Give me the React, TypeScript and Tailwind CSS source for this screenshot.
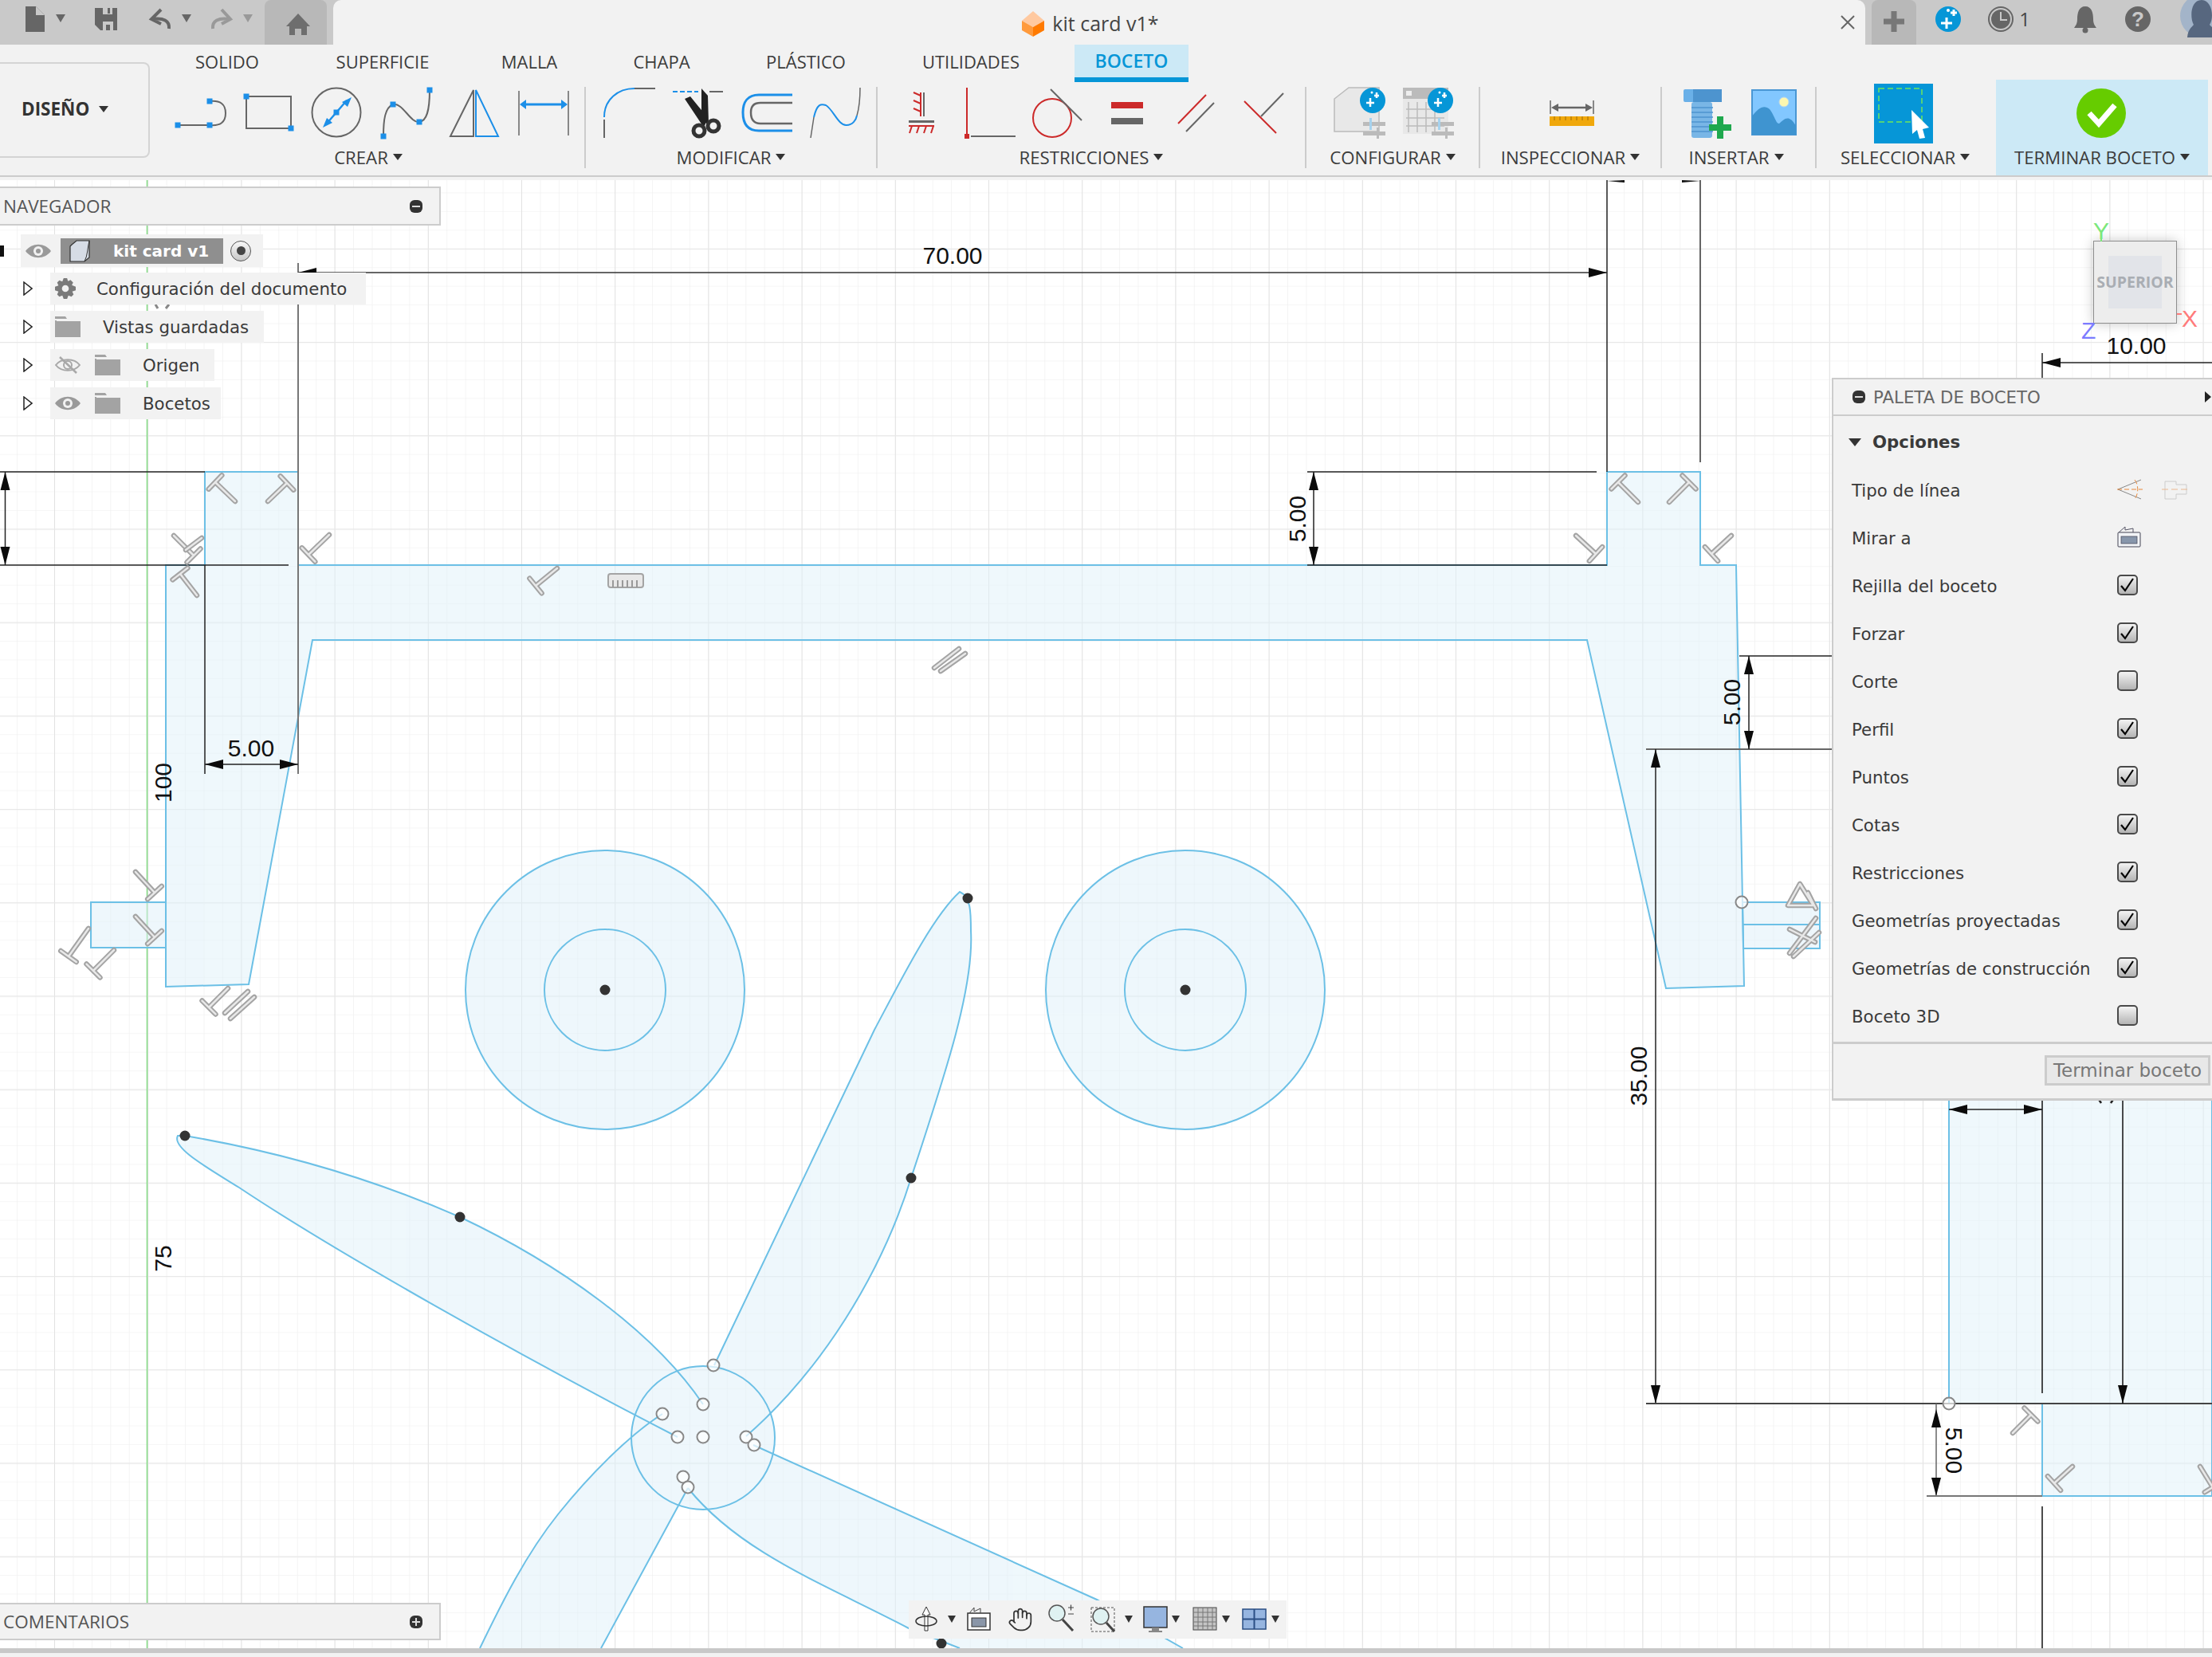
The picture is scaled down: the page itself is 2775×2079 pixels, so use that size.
import type { ReactNode } from 'react';
import { Hand } from 'lucide-react';

const GRAY = '#666';
const BLUE = '#1c8fe8';
const RED = '#cc2a2a';
const SKETCH = '#6cc0e6';

// icons are drawn in page coordinates, the viewBox cuts out the cell
function Cell({ x, y, w, h, children }: { x: number; y: number; w: number; h: number; children?: ReactNode }) {
    return (
        <svg width={w} height={h} viewBox={`${x} ${y} ${w} ${h}`} className="shrink-0">
            {children}
        </svg>
    );
}

function Tool({ x, w, children }: { x: number; w: number; children?: ReactNode }) {
    return <Cell x={x} y={105} w={w} h={75}>{children}</Cell>;
}

function Caret() {
    return <span className="inline-block w-0 h-0 ml-[6px] mb-[3px] border-x-[6px] border-t-[8px] border-x-transparent border-t-[#333]" />;
}

function Group({ label, children, shift = '' }: { label: string; children: ReactNode; shift?: string }) {
    return (
        <div className="flex flex-col shrink-0">
            <div className="flex h-[80px] pt-[5px]">{children}</div>
            <div className={`h-[36px] flex items-center justify-center text-[22.2px] text-[#3c3c3c] ${shift}`}>
                {label}
                <Caret />
            </div>
        </div>
    );
}

function Sep() {
    return <div className="w-[2px] h-[102px] mt-[9px] bg-[#cccccc] shrink-0" />;
}

function Handle({ x, y }: { x: number; y: number }) {
    return <rect x={x - 3.5} y={y - 3.5} width={7} height={7} fill={BLUE} />;
}

function Badge({ cx }: { cx: number }) {
    return (
        <g>
            <ellipse cx={cx} cy={126} rx={16} ry={16} fill="#0696d7" />
            <path d={`M${cx - 3} 123v11M${cx - 8} 129h10M${cx + 5} 116v7M${cx + 2} 120h6`} stroke="#fff" strokeWidth={2.5} />
            <circle cx={cx - 1} cy={116} r={1.5} fill="#fff" />
        </g>
    );
}

function Sliders({ x }: { x: number }) {
    return (
        <g>
            <rect x={x} y={153} width={28} height={5} fill="#bbb" />
            <rect x={x} y={165} width={28} height={5} fill="#bbb" />
            <rect x={x + 8} y={148} width={3} height={15} fill="#a6d2ee" />
            <rect x={x + 17} y={160} width={3} height={14} fill="#bbb" />
        </g>
    );
}

function Eye({ off = false }: { off?: boolean }) {
    return (
        <svg width={32} height={24} viewBox="0 0 32 24" className="shrink-0">
            {off ? (
                <g fill="none" stroke="#a8a8a8" strokeWidth={2}>
                    <path d="M1 12C8 3 24 3 31 12C24 21 8 21 1 12Z" />
                    <circle cx={16} cy={12} r={5} />
                    <path d="M6 2L27 22" strokeWidth={2.5} />
                </g>
            ) : (
                <g>
                    <path d="M0 12C8 1 24 1 32 12C24 23 8 23 0 12Z" fill="#9a9a9a" />
                    <circle cx={16} cy={12} r={6} fill="#f2f2f2" />
                    <circle cx={16} cy={12} r={3} fill="#9a9a9a" />
                </g>
            )}
        </svg>
    );
}

function Folder() {
    return (
        <svg width={32} height={26} viewBox="0 0 32 26" className="shrink-0">
            <path d="M0 0H13L15 3H2V6H32V26H0Z" fill="#a3a3a3" />
            <path d="M0 3H14V5H0Z" fill="#f2f2f2" />
        </svg>
    );
}

function Expander() {
    return (
        <svg width={12} height={18} viewBox="0 0 12 18" className="shrink-0">
            <path d="M1 1L11 9L1 17Z" fill="#fff" stroke="#222" strokeWidth={1.5} />
        </svg>
    );
}

function Pill({ plus = false }: { plus?: boolean }) {
    return (
        <svg width={16} height={16} viewBox="0 0 16 16" className="shrink-0">
            <rect x={0} y={0} width={16} height={16} rx={6} fill="#333" />
            <path d={plus ? 'M3 8H13M8 3V13' : 'M3 8H13'} stroke="#ddd" strokeWidth={2} />
        </svg>
    );
}

function TreeRow({ children, width }: { children: ReactNode; width: string }) {
    return (
        <div className="flex items-center h-[40px]">
            <div className="w-[29px]" />
            <Expander />
            <div className="w-[22px]" />
            <div className={`flex items-center h-full bg-[#f2f2f2] ${width}`}>{children}</div>
        </div>
    );
}

function Checkbox({ checked }: { checked: boolean }) {
    return (
        <div className="relative w-[26px] h-[26px] rounded-[5px] border-2 border-[#4a4a4a] bg-gradient-to-b from-[#f4f4f4] to-[#b4b4b4]">
            {checked && (
                <svg width={22} height={22} viewBox="0 0 22 22" className="absolute inset-0">
                    <path d="M3 12L8 18L18 3" fill="none" stroke="#000" strokeWidth={2.2} />
                </svg>
            )}
        </div>
    );
}

function PaletteRow({ label, children }: { label: string; children: ReactNode }) {
    return (
        <div className="flex items-center h-[60px] pl-[23px]">
            <span className="w-[333px] pt-[3px]">{label}</span>
            {children}
        </div>
    );
}

// constraint glyph: bar centre + end of the stem
function T({ b, s }: { b: [number, number]; s: [number, number] }) {
    const dx = s[0] - b[0];
    const dy = s[1] - b[1];
    const l = Math.hypot(dx, dy);
    const px = (-dy / l) * 12;
    const py = (dx / l) * 12;
    const d = `M${b[0] - px} ${b[1] - py}L${b[0] + px} ${b[1] + py}M${b[0]} ${b[1]}L${s[0]} ${s[1]}`;
    return <Bar d={d} />;
}

function Bar({ d }: { d: string }) {
    return (
        <g fill="none" strokeLinecap="round" strokeLinejoin="round">
            <path d={d} stroke="#a4a4a4" strokeWidth={6.5} />
            <path d={d} stroke="#e8e8e8" strokeWidth={2.5} />
        </g>
    );
}

function Arrow({ x, y, dir }: { x: number; y: number; dir: 'l' | 'r' | 'u' | 'd' }) {
    const len = 23;
    const w = 6;
    const pts = {
        l: `${x},${y} ${x + len},${y - w} ${x + len},${y + w}`,
        r: `${x},${y} ${x - len},${y - w} ${x - len},${y + w}`,
        u: `${x},${y} ${x - w},${y + len} ${x + w},${y + len}`,
        d: `${x},${y} ${x - w},${y - len} ${x + w},${y - len}`,
    }[dir];
    return <polygon points={pts} fill="#0b0b0b" />;
}

function L({ x1, y1, x2, y2, c = '#222', w = 1.5 }: { x1: number; y1: number; x2: number; y2: number; c?: string; w?: number }) {
    return <line x1={x1} y1={y1} x2={x2} y2={y2} stroke={c} strokeWidth={w} />;
}

function Dim({ x, y, rot, children }: { x: number; y: number; rot?: number; children: string }) {
    return (
        <text
            x={x}
            y={y}
            textAnchor="middle"
            dominantBaseline="central"
            transform={rot ? `rotate(${rot} ${x} ${y})` : undefined}
            className="font-['Liberation_Sans',sans-serif] text-[30px] fill-[#111]"
        >
            {children}
        </text>
    );
}

const OUTLINE = 'M208 709L257 709L257 592L374 592L374 709L2016 709L2016 592L2133 592L2133 709L2178 709L2188 1237L2090 1240L1991 803L392 803L312 1235L208 1238Z';
const TAB_RIGHT = 'M2186 1132H2283V1190H2187Z';
const TAB_LEFT = 'M114 1132H208V1189H114Z';
const CORNER = 'M2445 1370H2775V1877H2562V1761H2445Z';
const BLADES = [
    {
        fill: 'M232 1425C350 1445 470 1480 577 1527C700 1585 820 1670 882 1762L850 1803C650 1700 420 1570 300 1490C260 1465 215 1440 223 1425Z',
        line: 'M232 1425C350 1445 470 1480 577 1527C700 1585 820 1670 882 1762M850 1803C650 1700 420 1570 300 1490C260 1465 215 1440 223 1425L232 1425',
    },
    {
        fill: 'M1204 1119C1170 1150 1130 1230 1097 1292L896 1713L936 1802C1030 1720 1105 1600 1143 1478C1185 1350 1222 1240 1218 1168C1218 1145 1218 1125 1204 1119Z',
        line: 'M896 1713L1097 1292C1130 1230 1170 1150 1204 1119C1218 1125 1218 1145 1218 1168C1222 1240 1185 1350 1143 1478C1105 1600 1030 1720 936 1802',
    },
    {
        fill: 'M945 1813L1376 2007L1484 2068L1204 2068L1140 2043C1040 1990 930 1950 863 1867Z',
        line: 'M945 1813L1376 2007L1484 2068M1204 2068L1140 2043C1040 1990 930 1950 863 1867',
    },
    {
        fill: 'M831 1774C790 1800 740 1850 700 1900C660 1950 630 2010 602 2068L754 2068L863 1867Z',
        line: 'M831 1774C790 1800 740 1850 700 1900C660 1950 630 2010 602 2068M754 2068L863 1867',
    },
];

function SketchCanvas() {
    const open: [number, number][] = [
        [895, 1713], [882, 1762], [831, 1774], [850, 1803], [882, 1803], [936, 1803], [946, 1813], [857, 1853], [863, 1866],
        [2185, 1132], [2445, 1761],
    ];
    const solid: [number, number][] = [
        [759, 1242], [1487, 1242], [232, 1425], [577, 1527], [1214, 1127], [1143, 1478], [1181, 2062],
    ];
    const glyphs: [[number, number], [number, number]][] = [
        [[270, 605], [295, 629]], [[360, 606], [336, 629]], [[243, 697], [218, 672]], [[387, 696], [413, 671]],
        [[226, 720], [247, 747]], [[194, 1120], [170, 1094]], [[194, 1176], [170, 1150]], [[86, 1200], [111, 1165]],
        [[117, 1218], [143, 1192]], [[262, 1264], [286, 1240]], [[672, 735], [699, 713]],
        [[2030, 605], [2055, 630]], [[2119, 605], [2094, 630]], [[2002, 695], [1977, 672]], [[2147, 695], [2172, 672]],
        [[2548, 1775], [2525, 1798]], [[2577, 1861], [2600, 1840]], [[2776, 1866], [2760, 1840]],
    ];
    return (
        <svg width={2775} height={1842} viewBox="0 226 2775 1842" className="absolute inset-0">
            <defs>
                <pattern id="minor" x={68} y={1015} width={23.44} height={23.44} patternUnits="userSpaceOnUse">
                    <path d="M0 0V23.44M0 0H23.44" stroke="#eeeeee" strokeWidth={1.2} fill="none" />
                </pattern>
                <pattern id="major" x={68} y={1015} width={117.2} height={117.2} patternUnits="userSpaceOnUse">
                    <path d="M0 0V117.2" stroke="#dedede" strokeWidth={1.6} fill="none" />
                    <path d="M0 0H117.2" stroke="#e8e8e8" strokeWidth={2.6} fill="none" />
                </pattern>
            </defs>
            <rect x={0} y={226} width={2775} height={1842} fill="#fff" />
            <rect x={0} y={226} width={2775} height={1842} fill="url(#minor)" />
            <rect x={0} y={226} width={2775} height={1842} fill="url(#major)" />
            <L x1={184.5} y1={226} x2={184.5} y2={2068} c="#83dc83" w={1.5} />

            {/* one flat tint for all the profiles, outlines on top */}
            <g fill="#dff1fa" opacity={0.5}>
                <path d={OUTLINE} />
                <path d={TAB_LEFT} />
                <path d={TAB_RIGHT} />
                <path d={CORNER} />
                <circle cx={759} cy={1242} r={175} />
                <circle cx={1487} cy={1242} r={175} />
                {BLADES.map(b => (
                    <path key={b.fill} d={b.fill} />
                ))}
                <circle cx={882} cy={1804} r={90} />
            </g>
            <g fill="none" stroke={SKETCH} strokeWidth={2}>
                <path d={OUTLINE} />
                <path d={TAB_LEFT} />
                <path d={TAB_RIGHT} />
                <path d="M2187 1160H2283" />
                <path d={CORNER} />
                <circle cx={759} cy={1242} r={175} />
                <circle cx={759} cy={1242} r={76} />
                <circle cx={1487} cy={1242} r={175} />
                <circle cx={1487} cy={1242} r={76} />
                {BLADES.map(b => (
                    <path key={b.line} d={b.line} />
                ))}
                <circle cx={882} cy={1804} r={90} />
            </g>

            {/* dimensions */}
            <L x1={374} y1={330} x2={374} y2={971} c="#777" w={2} />
            <L x1={257} y1={709} x2={257} y2={971} />
            <L x1={374} y1={342} x2={2016} y2={342} c="#333" />
            <Arrow x={374} y={342} dir="l" />
            <Arrow x={2016} y={342} dir="r" />
            <L x1={2016} y1={226} x2={2016} y2={592} />
            <L x1={2133} y1={226} x2={2133} y2={580} c="#666" w={2} />
            <polygon points="2016,227 2038,226 2038,229" fill="#111" />
            <polygon points="2133,227 2110,226 2110,229" fill="#111" />
            <Dim x={1195} y={320}>70.00</Dim>

            <L x1={0} y1={592} x2={257} y2={592} />
            <L x1={0} y1={709} x2={362} y2={709} />
            <L x1={6.5} y1={592} x2={6.5} y2={709} />
            <Arrow x={6.5} y={592} dir="u" />
            <Arrow x={6.5} y={709} dir="d" />

            <L x1={257} y1={959} x2={374} y2={959} />
            <Arrow x={257} y={959} dir="l" />
            <Arrow x={374} y={959} dir="r" />
            <Dim x={315} y={938}>5.00</Dim>
            <Dim x={204} y={982} rot={-90}>100</Dim>
            <Dim x={204} y={1579} rot={-90}>75</Dim>

            <L x1={1640} y1={592} x2={2003} y2={592} />
            <L x1={1640} y1={709} x2={2016} y2={709} />
            <L x1={1648} y1={592} x2={1648} y2={709} />
            <Arrow x={1648} y={592} dir="u" />
            <Arrow x={1648} y={709} dir="d" />
            <Dim x={1627} y={651} rot={-90}>5.00</Dim>

            <L x1={2182} y1={823} x2={2298} y2={823} />
            <L x1={2065} y1={940} x2={2298} y2={940} c="#666" w={2} />
            <L x1={2194} y1={823} x2={2194} y2={940} />
            <Arrow x={2194} y={823} dir="u" />
            <Arrow x={2194} y={940} dir="d" />
            <Dim x={2172} y={881} rot={-90}>5.00</Dim>

            <L x1={2077} y1={940} x2={2077} y2={1761} />
            <Arrow x={2077} y={940} dir="u" />
            <Arrow x={2077} y={1761} dir="d" />
            <Dim x={2055} y={1350} rot={-90}>35.00</Dim>
            <L x1={2065} y1={1761} x2={2775} y2={1761} c="#444" w={2} />

            <L x1={2429} y1={1761} x2={2429} y2={1877} c="#666" />
            <Arrow x={2429} y={1768} dir="u" />
            <Arrow x={2429} y={1877} dir="d" />
            <L x1={2417} y1={1877} x2={2562} y2={1877} c="#777" w={2} />
            <Dim x={2451} y={1820} rot={90}>5.00</Dim>

            <L x1={2445} y1={1392} x2={2562} y2={1392} />
            <Arrow x={2445} y={1392} dir="l" />
            <Arrow x={2562} y={1392} dir="r" />
            <L x1={2562} y1={1370} x2={2562} y2={1748} c="#111" />
            <L x1={2562} y1={1890} x2={2562} y2={2068} c="#111" />
            <L x1={2663} y1={1370} x2={2663} y2={1761} c="#111" />
            <Arrow x={2663} y={1761} dir="d" />
            <Dim x={2503} y={1368}>5.00</Dim>
            <path d="M2632 1378L2636 1384M2652 1378L2648 1384" stroke="#222" strokeWidth={2.5} />

            <L x1={2562} y1={443} x2={2562} y2={480} />
            <L x1={2562} y1={455} x2={2775} y2={455} />
            <Arrow x={2562} y={455} dir="l" />
            <Dim x={2680} y={433}>10.00</Dim>

            {/* constraints */}
            <path d="M195 382L198 387M212 382L208 387" stroke="#888" strokeWidth={3} />
            {glyphs.map(([b, s], i) => (
                <T key={i} b={b} s={s} />
            ))}
            <Bar d="M282 1271L311 1244M289 1278L319 1251" />
            <Bar d="M1172 838L1203 814M1180 842L1211 820" />
            <Bar d="M233 690L253 675" />
            <Bar d="M2258 1109L2243 1136H2275ZM2245 1196L2278 1152M2245 1166L2277 1182M2250 1200L2282 1170M2268 1120L2278 1140" />
            <g>
                <rect x={763} y={720} width={44} height={17} rx={3} fill="#e8e8e8" stroke="#a4a4a4" strokeWidth={2} />
                <path d="M769 728V737M775 728V737M781 728V737M787 728V737M793 728V737M799 728V737" stroke="#999" strokeWidth={2} />
            </g>

            {solid.map(([x, y]) => (
                <circle key={`${x}-${y}`} cx={x} cy={y} r={6.5} fill="#333" />
            ))}
            {open.map(([x, y]) => (
                <circle key={`${x}-${y}`} cx={x} cy={y} r={7.5} fill="#fff" fillOpacity={0.7} stroke="#888" strokeWidth={2} />
            ))}
        </svg>
    );
}

function Header() {
    return (
        <div className="flex h-[56px] bg-[#c9c9c9] shrink-0">
            <Cell x={0} y={0} w={100} h={56}>
                <path d="M32 8H45L56 19V40H32Z" fill="#666" />
                <path d="M45 8V19H56" fill="#c9c9c9" />
                <path d="M70 18H82L76 28Z" fill="#666" />
            </Cell>
            <Cell x={100} y={0} w={65} h={56}>
                <path d="M119 10H147V38H126L119 31Z" fill="#666" />
                <rect x={129} y={10} width={12} height={8} fill="#c9c9c9" />
                <rect x={135} y={10} width={3} height={7} fill="#666" />
                <rect x={129} y={27} width={13} height={11} fill="#c9c9c9" />
                <rect x={133} y={31} width={5} height={7} fill="#666" />
            </Cell>
            <Cell x={165} y={0} w={85} h={56}>
                <path d="M202 12L190 24L202 30M191 24C205 22 213 26 212 36" fill="none" stroke="#666" strokeWidth={4} />
                <path d="M228 18H240L234 28Z" fill="#666" />
            </Cell>
            <Cell x={250} y={0} w={82} h={56}>
                <path d="M278 12L289 24L278 30M288 24C274 22 266 26 267 36" fill="none" stroke="#999" strokeWidth={4} />
                <path d="M305 18H317L311 28Z" fill="#999" />
            </Cell>
            <div className="w-[78px] bg-[#b8b8b8] rounded-t-[8px]">
                <Cell x={332} y={0} w={78} h={56}>
                    <path d="M374 17L389 33H385V44H363V33H359Z" fill="#6e6e6e" />
                    <rect x={370} y={36} width={8} height={8} fill="#b8b8b8" />
                </Cell>
            </div>
            <div className="relative flex items-center justify-center w-[1922px] ml-[8px] pr-[22px] pt-[3px] bg-[#f2f2f2] rounded-t-[10px] font-['Open_Sans',sans-serif] text-[25px] text-[#444]">
                <svg width={28} height={32} viewBox="0 0 28 32" className="mr-[10px]">
                    <polygon points="14,0 28,12 14,20 0,12" fill="#ffc9a0" />
                    <polygon points="0,12 14,20 14,32 0,24" fill="#ff9a3c" />
                    <polygon points="28,12 14,20 14,32 28,24" fill="#ff7a00" />
                </svg>
                kit card v1*
                <svg width={18} height={18} viewBox="0 0 18 18" className="absolute right-[13px] top-[19px]">
                    <path d="M1 1L17 17M17 1L1 17" stroke="#666" strokeWidth={2} />
                </svg>
            </div>
            <div className="flex items-center justify-center w-[56px] ml-[8px] bg-[#b8b8b8] rounded-t-[8px]">
                <svg width={26} height={26} viewBox="0 0 26 26" className="mb-[3px]">
                    <path d="M13 0V26M0 13H26" stroke="#777" strokeWidth={7} />
                </svg>
            </div>
            <Cell x={2404} y={0} w={371} h={56}>
                <circle cx={2444} cy={24} r={16} fill="#0696d7" />
                <path d="M2442 22V36M2435 29H2449M2451 12V20M2447 16H2455" stroke="#fff" strokeWidth={3} />
                <circle cx={2444} cy={13} r={2} fill="#fff" />
                <circle cx={2510} cy={24} r={15} fill="none" stroke="#666" strokeWidth={2} />
                <circle cx={2510} cy={24} r={12} fill="#666" />
                <path d="M2510 15V25H2518" fill="none" stroke="#c9c9c9" strokeWidth={2} />
                <text x={2540} y={33} textAnchor="middle" className="font-['Open_Sans',sans-serif] text-[24px] fill-[#444]">1</text>
                <path d="M2616 8C2624 8 2626 16 2626 24C2626 30 2628 32 2630 35H2602C2604 32 2606 30 2606 24C2606 16 2608 8 2616 8Z" fill="#666" />
                <circle cx={2616} cy={38} r={3.5} fill="#666" />
                <circle cx={2682} cy={24} r={16} fill="#666" />
                <text x={2682} y={33} textAnchor="middle" className="font-['Liberation_Sans',sans-serif] font-bold text-[26px] fill-[#c9c9c9]">?</text>
                <circle cx={2762} cy={20} r={27} fill="#a3b4c9" />
                <path d="M2744 47C2745 36 2750 34 2752 31C2747 22 2748 0 2762 0C2775 0 2778 22 2772 31C2776 36 2780 36 2782 47Z" fill="#57677f" />
            </Cell>
        </div>
    );
}

function Ribbon() {
    const tabs = [
        ['SOLIDO', 'w-[160px]'], ['SUPERFICIE', 'w-[230px]'], ['MALLA', 'w-[138px]'], ['CHAPA', 'w-[194px]'],
        ['PLÁSTICO', 'w-[168px]'], ['UTILIDADES', 'w-[246px]'],
    ];
    return (
        <div className="flex h-[170px] bg-[#f2f2f2] shrink-0 font-['Open_Sans',sans-serif]">
            <div className="w-[205px] shrink-0 pt-[22px]">
                <div className="flex items-center w-[188px] h-[120px] pl-[27px] pb-[2px] border-2 border-l-0 border-[#d4d4d4] rounded-r-[8px] font-bold text-[22.5px] text-[#333]">
                    DISEÑO
                    <span className="w-0 h-0 ml-[12px] border-x-[6px] border-t-[8px] border-x-transparent border-t-[#333]" />
                </div>
            </div>
            <div className="flex flex-col">
                <div className="flex h-[44px] text-[22px] text-[#3c3c3c]">
                    {tabs.map(([label, width]) => (
                        <div key={label} className={`flex items-center justify-center pb-[2px] ${width}`}>{label}</div>
                    ))}
                    <div className="flex items-center justify-center w-[143px] h-[47px] ml-[7px] bg-[#cce9f6] border-b-[6px] border-[#0696d7] text-[#0696d7] text-[23px] font-semibold">BOCETO</div>
                </div>
                <div className="flex">
                    <Group label="CREAR" shift="pr-[14px]">
                        <Tool x={205} w={90}>
                            <path d="M223 157H263M263 127Q283 125 283 142Q283 159 263 157" fill="none" stroke={GRAY} strokeWidth={2} />
                            <Handle x={223} y={157} /><Handle x={263} y={157} /><Handle x={263} y={127} />
                        </Tool>
                        <Tool x={295} w={90}>
                            <rect x={309} y={121} width={56} height={40} fill="none" stroke={GRAY} strokeWidth={2} />
                            <Handle x={309} y={121} /><Handle x={365} y={161} />
                        </Tool>
                        <Tool x={385} w={75}>
                            <circle cx={422} cy={141} r={30.5} fill="none" stroke={GRAY} strokeWidth={2} />
                            <path d="M409 156L435 126" stroke={BLUE} strokeWidth={2.5} />
                            <path d="M405 160L417 154L410 148ZM441 122L429 128L436 134Z" fill={BLUE} />
                            <Handle x={422} y={141} />
                        </Tool>
                        <Tool x={460} w={95}>
                            <path d="M481 171C481 150 483 135 493 131C505 128 515 155 526 153C535 152 539 140 539 113" fill="none" stroke={GRAY} strokeWidth={2} />
                            <Handle x={481} y={171} /><Handle x={493} y={131} /><Handle x={526} y={153} /><Handle x={539} y={113} />
                        </Tool>
                        <Tool x={555} w={85}>
                            <path d="M594 113L565 171H594Z" fill="none" stroke={GRAY} strokeWidth={2} />
                            <path d="M597 113L625 171H597Z" fill="none" stroke={BLUE} strokeWidth={2} />
                        </Tool>
                        <Tool x={640} w={93}>
                            <path d="M651 114V170M713 114V170" stroke={GRAY} strokeWidth={1.5} />
                            <path d="M656 131H708" stroke={BLUE} strokeWidth={3} />
                            <path d="M652 131L660 125V137ZM712 131L704 125V137Z" fill={BLUE} />
                        </Tool>
                    </Group>
                    <Sep />
                    <Group label="MODIFICAR">
                        <Tool x={735} w={95}>
                            <path d="M758 150V173M796 111H822" stroke={GRAY} strokeWidth={2} />
                            <path d="M758 147C758 125 775 111 796 111" fill="none" stroke={BLUE} strokeWidth={2} />
                        </Tool>
                        <Tool x={830} w={90}>
                            <path d="M844 115H876" stroke={BLUE} strokeWidth={2} strokeDasharray="6 3" />
                            <path d="M890 115H907" stroke={GRAY} strokeWidth={2} />
                            <polygon points="880,111 888,120 889,156 880,152" fill="#222" />
                            <polygon points="859,124 866,121 888,148 883,160" fill="#222" />
                            <circle cx={877} cy={164} r={7} fill="none" stroke="#333" strokeWidth={5} />
                            <circle cx={895} cy={158} r={7} fill="none" stroke="#333" strokeWidth={5} />
                        </Tool>
                        <Tool x={920} w={85}>
                            <path d="M994 119H952C938 119 932 128 932 141C932 155 938 164 952 164H994" fill="none" stroke={BLUE} strokeWidth={3} />
                            <path d="M994 129H954C946 129 942 133 942 141C942 150 946 155 954 155H994" fill="none" stroke={GRAY} strokeWidth={2.5} />
                        </Tool>
                        <Tool x={1005} w={94}>
                            <path d="M1017 173L1021 147M1075 145C1078 135 1079 120 1079 110" fill="none" stroke={GRAY} strokeWidth={1.5} />
                            <path d="M1021 147C1025 130 1030 130 1036 132C1045 137 1052 158 1062 157C1070 157 1074 150 1075 145" fill="none" stroke={BLUE} strokeWidth={2} />
                        </Tool>
                    </Group>
                    <Sep />
                    <Group label="RESTRICCIONES">
                        <Tool x={1101} w={89}>
                            <path d="M1159 116V146" stroke={GRAY} strokeWidth={2} />
                            <path d="M1155 116V146M1155 120L1146 116M1155 130L1146 126M1155 140L1146 136" stroke={RED} strokeWidth={2} />
                            <rect x={1140} y={151} width={32} height={3} fill={GRAY} />
                            <path d="M1140 158H1172M1144 158L1141 167M1153 158L1150 167M1162 158L1159 167M1171 158L1168 167" stroke={RED} strokeWidth={2} />
                        </Tool>
                        <Tool x={1190} w={100}>
                            <path d="M1213 110V168" stroke={RED} strokeWidth={2} />
                            <rect x={1210} y={168} width={6} height={6} fill={RED} />
                            <path d="M1218 171H1274" stroke={GRAY} strokeWidth={2} />
                        </Tool>
                        <Tool x={1290} w={80}>
                            <circle cx={1320} cy={148} r={24} fill="none" stroke={RED} strokeWidth={2} />
                            <path d="M1318 112L1357 151" stroke={GRAY} strokeWidth={2} />
                        </Tool>
                        <Tool x={1370} w={85}>
                            <rect x={1394} y={128} width={40} height={8} fill={RED} />
                            <rect x={1394} y={148} width={40} height={8} fill={GRAY} />
                        </Tool>
                        <Tool x={1455} w={85}>
                            <path d="M1478 155L1513 119" stroke={RED} strokeWidth={2} />
                            <path d="M1488 165L1523 129" stroke={GRAY} strokeWidth={2} />
                        </Tool>
                        <Tool x={1540} w={97}>
                            <path d="M1561 127L1601 167" stroke={RED} strokeWidth={2} />
                            <path d="M1582 146L1610 117" stroke={GRAY} strokeWidth={2} />
                        </Tool>
                    </Group>
                    <Sep />
                    <Group label="CONFIGURAR">
                        <Tool x={1639} w={111}>
                            <path d="M1692 110H1730V165H1674V124Z" fill="#e8e8e8" stroke="#bbb" strokeWidth={1.5} />
                            <Badge cx={1722} />
                            <Sliders x={1710} />
                        </Tool>
                        <Tool x={1750} w={105}>
                            <rect x={1760} y={110} width={57} height={58} fill="#e8e8e8" />
                            <rect x={1760} y={110} width={57} height={14} fill="#bbb" />
                            <rect x={1764} y={114} width={7} height={6} fill="#eee" />
                            <path d="M1767 128V166M1778 128V166M1789 128V166M1800 128V166M1764 137H1812M1764 148H1812M1764 158H1812" stroke="#bbb" strokeWidth={1.5} />
                            <Badge cx={1807} />
                            <Sliders x={1796} />
                        </Tool>
                    </Group>
                    <Sep />
                    <Group label="INSPECCIONAR">
                        <Tool x={1857} w={226}>
                            <path d="M1945 126V143M1999 126V143" stroke={GRAY} strokeWidth={1.5} />
                            <path d="M1950 135H1994" stroke={GRAY} strokeWidth={2.5} />
                            <path d="M1946 135L1955 130V140ZM1998 135L1989 130V140Z" fill={GRAY} />
                            <rect x={1944} y={146} width={56} height={12} fill="#f0a80c" />
                            <path d="M1950 146V151M1957 146V151M1964 146V151M1971 146V151M1978 146V151M1985 146V151M1992 146V151" stroke="#a06c00" strokeWidth={1} />
                        </Tool>
                    </Group>
                    <Sep />
                    <Group label="INSERTAR" shift="pr-[6px]">
                        <Tool x={2085} w={100}>
                            <rect x={2112} y={112} width={48} height={16} rx={2} fill="#6ab0e8" />
                            <rect x={2124} y={112} width={36} height={16} fill="#4d94cf" />
                            <rect x={2122} y={128} width={26} height={45} rx={3} fill="#79b6e6" />
                            <path d="M2122 135H2149M2122 141H2149M2122 147H2149M2122 153H2149M2122 159H2149M2122 165H2149" stroke="#4d94cf" strokeWidth={1.5} />
                            <path d="M2144 160H2172M2158 146V174" stroke="#1fa84e" strokeWidth={8} />
                        </Tool>
                        <Tool x={2185} w={92}>
                            <rect x={2198} y={113} width={55} height={56} fill="#82c7ff" stroke="#4a97d4" strokeWidth={2} />
                            <ellipse cx={2238} cy={128} rx={6} ry={6} fill="#fdf7b0" stroke="#b9d8ee" />
                            <path d="M2198 146C2206 135 2213 131 2220 137C2226 144 2228 156 2232 155C2238 150 2244 142 2253 158V169H2198Z" fill="#3f94d0" />
                        </Tool>
                    </Group>
                    <Sep />
                    <Group label="SELECCIONAR" shift="pr-[3px]">
                        <Tool x={2279} w={225}>
                            <rect x={2351} y={105} width={74} height={75} fill="#0696d7" />
                            <rect x={2357} y={111} width={54} height={42} fill="none" stroke="#55d27a" strokeWidth={2} strokeDasharray="7 4" />
                            <polygon points="2398,138 2420,160 2412,162 2415,173 2408,174 2405,163 2399,168" fill="#fff" />
                        </Tool>
                    </Group>
                    <div className="bg-[#cce9f6] h-[120px]">
                        <Group label="TERMINAR BOCETO">
                            <Tool x={2504} w={266}>
                                <circle cx={2636} cy={142} r={31} fill="#66cc00" />
                                <path d="M2621 142L2633 155L2653 132" fill="none" stroke="#fff" strokeWidth={7} />
                            </Tool>
                        </Group>
                    </div>
                </div>
            </div>
        </div>
    );
}

function Navigator() {
    return (
        <div className="absolute left-0 top-[8px] w-[553px] font-['DejaVu_Sans',sans-serif] text-[21.3px] text-[#3a3a3a]">
            <div className="flex items-center justify-between h-[49px] pl-[4px] pr-[21px] bg-[#f2f2f2] border-2 border-l-0 border-[#cccccc] font-['Open_Sans',sans-serif] text-[22.5px] text-[#555]">
                NAVEGADOR
                <Pill />
            </div>
            <div className="flex flex-col gap-[8px] mt-[11px]">
                <div className="flex items-center h-[41px] mb-[-1px]">
                    <div className="w-[5px] h-[14px] bg-[#111]" />
                    <div className="flex items-center w-[304px] h-full ml-[21px] bg-[#f2f2f2]">
                        <div className="w-[6px]" />
                        <Eye />
                        <div className="flex items-center w-[204px] h-[32px] ml-[12px] bg-[#8f8f8f] text-white font-bold text-[20px]">
                            <svg width={28} height={28} viewBox="0 0 28 28" className="ml-[9px]">
                                <path d="M5 6L11 1H27V22L21 27H3V8Z" fill="#d6dce6" stroke="#333" strokeWidth={1.2} />
                                <path d="M21 27C25 20 25 8 27 1" fill="none" stroke="#333" />
                            </svg>
                            <span className="ml-[29px]">kit card v1</span>
                        </div>
                        <div className="flex items-center justify-center w-[26px] h-[26px] ml-[9px] rounded-full bg-gradient-to-b from-[#f8f8f8] to-[#c8c8c8] border border-[#555]">
                            <div className="w-[11px] h-[11px] rounded-full bg-[#444]" />
                        </div>
                    </div>
                </div>
                <TreeRow width="w-[396px]">
                    <svg width={26} height={26} viewBox="0 0 24 24" className="ml-[6px] shrink-0">
                        <path d="M10 0H14L15 3.5L18 2L21 5L19.5 8L24 10V14L20 15.5L21.5 19L19 21.5L15.5 20L14 24H10L8.5 20L5 21.5L2.5 19L4 15.5L0 14V10L4 8.5L2.5 5L5 2.5L8.5 4ZM12 8A4 4 0 1 0 12 16A4 4 0 1 0 12 8Z" fill="#7a7a7a" fillRule="evenodd" />
                    </svg>
                    <span className="ml-[26px] pt-[2px]">Configuración del documento</span>
                </TreeRow>
                <TreeRow width="w-[268px]">
                    <div className="ml-[6px]" />
                    <Folder />
                    <span className="ml-[28px] pt-[2px]">Vistas guardadas</span>
                </TreeRow>
                <TreeRow width="w-[206px]">
                    <div className="ml-[6px]" />
                    <Eye off />
                    <div className="ml-[18px]" />
                    <Folder />
                    <span className="ml-[28px] pt-[2px]">Origen</span>
                </TreeRow>
                <TreeRow width="w-[214px]">
                    <div className="ml-[6px]" />
                    <Eye />
                    <div className="ml-[18px]" />
                    <Folder />
                    <span className="ml-[28px] pt-[2px]">Bocetos</span>
                </TreeRow>
            </div>
        </div>
    );
}

function ViewCube() {
    return (
        <div className="absolute left-[2610px] top-[44px] w-[155px] h-[150px]">
            <div className="absolute left-[16px] top-[32px] flex items-center justify-center w-[105px] h-[104px] bg-[#ededed] border border-[#8e8e8e] shadow-[0_0_14px_rgba(0,0,0,0.22)]">
                <div className="absolute w-[67px] h-[66px] bg-[#e2e4e9]" />
                <span className="relative font-['Open_Sans',sans-serif] font-bold text-[19.5px] text-[#a9adb3]">SUPERIOR</span>
            </div>
            <div className="absolute left-[25px] top-[30px] w-[2px] h-[3px] bg-[#7be87b]" />
            <div className="absolute left-[121px] top-[123px] w-[6px] h-[2px] bg-[#ff7b7b]" />
            <span className="absolute left-[16px] top-[-3px] font-['Liberation_Sans',sans-serif] text-[30px] text-[#7be87b]">Y</span>
            <span className="absolute left-[127px] top-[107px] font-['Liberation_Sans',sans-serif] text-[30px] text-[#ff7b7b]">X</span>
            <span className="absolute left-[1px] top-[122px] font-['Liberation_Sans',sans-serif] text-[30px] text-[#7b7bff]">Z</span>
        </div>
    );
}

function Palette() {
    const checks: [string, boolean][] = [
        ['Rejilla del boceto', true], ['Forzar', true], ['Corte', false], ['Perfil', true], ['Puntos', true], ['Cotas', true],
        ['Restricciones', true], ['Geometrías proyectadas', true], ['Geometrías de construcción', true], ['Boceto 3D', false],
    ];
    return (
        <div className="absolute left-[2298px] top-[248px] w-[477px] bg-[#f2f2f2] border-l-[2px] border-[#cccccc] font-['DejaVu_Sans',sans-serif] text-[21.3px] text-[#3a3a3a]">
            <div className="flex items-center h-[48px] pl-[24px] pr-[1px] border-y-2 border-[#cccccc] text-[#666]">
                <Pill />
                <span className="ml-[10px] grow pt-[2px]">PALETA DE BOCETO</span>
                <span className="w-0 h-0 border-y-[7px] border-l-[8px] border-y-transparent border-l-[#222]" />
            </div>
            <div className="flex items-center h-[62px] pl-[19px] pt-[3px] font-bold">
                <span className="w-0 h-0 mr-[14px] border-x-[8px] border-t-[10px] border-x-transparent border-t-[#333]" />
                Opciones
            </div>
            <PaletteRow label="Tipo de línea">
                <svg width={90} height={28} viewBox="0 0 90 28">
                    <path d="M30 2L1 14L30 26" fill="none" stroke="#888" strokeWidth={1} />
                    <path d="M0 14H32M22 2C27 8 27 20 22 26" fill="none" stroke="#e88a3c" strokeWidth={1} strokeDasharray="6 3" />
                    <path d="M60 4H74V8H87V20H74V26H60Z" fill="none" stroke="#ccc" strokeWidth={1} />
                    <path d="M56 14H88" stroke="#eab890" strokeWidth={1} strokeDasharray="8 4" />
                </svg>
            </PaletteRow>
            <PaletteRow label="Mirar a">
                <svg width={30} height={28} viewBox="0 0 30 28">
                    <rect x={1} y={8} width={28} height={18} rx={1} fill="#f2f4f7" stroke="#445" />
                    <rect x={5} y={13} width={20} height={9} fill="#8796ab" stroke="#445" strokeWidth={0.7} />
                    <path d="M2 8L10 1V5L20 3V8" fill="none" stroke="#556" />
                </svg>
            </PaletteRow>
            {checks.map(([label, checked]) => (
                <PaletteRow key={label} label={label}>
                    <Checkbox checked={checked} />
                </PaletteRow>
            ))}
            <div className="flex justify-end h-[74px] pt-[14px] mt-[3px] pr-[2px] border-y-[3px] border-[#cccccc]">
                <div className="flex items-center justify-center w-[208px] h-[38px] bg-[#e8e8e8] border-[3px] border-[#cccccc] text-[#777] text-[23px]">
                    Terminar boceto
                </div>
            </div>
        </div>
    );
}

function NavBar() {
    const caret = (x: number) => <polygon points={`${x - 5},2027 ${x + 5},2027 ${x},2036`} fill="#333" />;
    return (
        <div className="absolute left-[1140px] top-[1782px] flex w-[474px] h-[48px] bg-[#f2f2f2]">
            <Cell x={1140} y={2008} w={65} h={48}>
                <path d="M1162 2016L1167 2026H1164V2046H1160V2026H1157Z" fill="#fff" stroke="#333" />
                <ellipse cx={1162} cy={2034} rx={13} ry={6} fill="none" stroke="#333" strokeWidth={1.5} />
                {caret(1194)}
            </Cell>
            <Cell x={1205} y={2008} w={50} h={48}>
                <rect x={1214} y={2024} width={28} height={21} fill="#fff" stroke="#333" strokeWidth={1.5} />
                <rect x={1219} y={2030} width={18} height={11} fill="#8a96a8" stroke="#333" />
                <path d="M1216 2024L1222 2017V2022L1230 2018V2024" fill="none" stroke="#444" />
            </Cell>
            <div className="flex items-center justify-center w-[50px] text-[#333]">
                <Hand size={32} strokeWidth={1.3} />
            </div>
            <Cell x={1305} y={2008} w={53} h={48}>
                <circle cx={1326} cy={2024} r={10} fill="#dff2f2" stroke="#555" strokeWidth={1.5} />
                <path d="M1333 2032L1346 2046" stroke="#444" strokeWidth={3} />
                <path d="M1340 2017H1347M1343.5 2013.5V2020.5M1340 2025H1347" stroke="#444" strokeWidth={1.2} />
            </Cell>
            <Cell x={1358} y={2008} w={70} h={48}>
                <rect x={1369} y={2017} width={29} height={30} fill="none" stroke="#555" strokeDasharray="3 2" />
                <circle cx={1381} cy={2028} r={10} fill="#dff2f2" stroke="#555" strokeWidth={1.5} />
                <path d="M1388 2036L1398 2047" stroke="#444" strokeWidth={3} />
                {caret(1416)}
            </Cell>
            <Cell x={1428} y={2008} w={62} h={48}>
                <rect x={1435} y={2016} width={29} height={26} fill="#96b5e0" stroke="#333" strokeWidth={1.5} />
                <path d="M1445 2042H1454V2046H1458V2048H1441V2046H1445Z" fill="#888" />
                {caret(1475)}
            </Cell>
            <Cell x={1490} y={2008} w={62} h={48}>
                <rect x={1497} y={2017} width={29} height={28} fill="#c4c4c4" stroke="#444" />
                <path d="M1503 2017V2045M1509 2017V2045M1515 2017V2045M1521 2017V2045M1497 2023H1526M1497 2029H1526M1497 2035H1526M1497 2040H1526" stroke="#777" />
                {caret(1538)}
            </Cell>
            <Cell x={1552} y={2008} w={62} h={48}>
                <rect x={1559} y={2019} width={29} height={25} fill="#96b5e0" stroke="#2b4f84" strokeWidth={1.5} />
                <path d="M1573.5 2019V2044M1559 2031.5H1588" stroke="#2b4f84" strokeWidth={2} />
                {caret(1600)}
            </Cell>
        </div>
    );
}

export default function App() {
    return (
        <div className="flex flex-col w-[2775px] h-[2079px] overflow-hidden bg-[#f2f2f2]">
            <Header />
            <Ribbon />
            <div className="h-[2px] bg-[#cccccc] shrink-0 -mt-[6px]" />
            <div className="h-[4px] shrink-0" />
            <div className="relative h-[1842px] shrink-0 overflow-hidden bg-white">
                <SketchCanvas />
                <Navigator />
                <ViewCube />
                <Palette />
                <div className="absolute left-0 top-[1785px] flex items-center justify-between w-[553px] h-[47px] pl-[4px] pr-[21px] bg-[#f2f2f2] border-2 border-l-0 border-[#cccccc] font-['Open_Sans',sans-serif] text-[22.5px] text-[#555]">
                    COMENTARIOS
                    <Pill plus />
                </div>
                <NavBar />
            </div>
            <div className="h-[6px] bg-[#c8c8c8] shrink-0" />
        </div>
    );
}
